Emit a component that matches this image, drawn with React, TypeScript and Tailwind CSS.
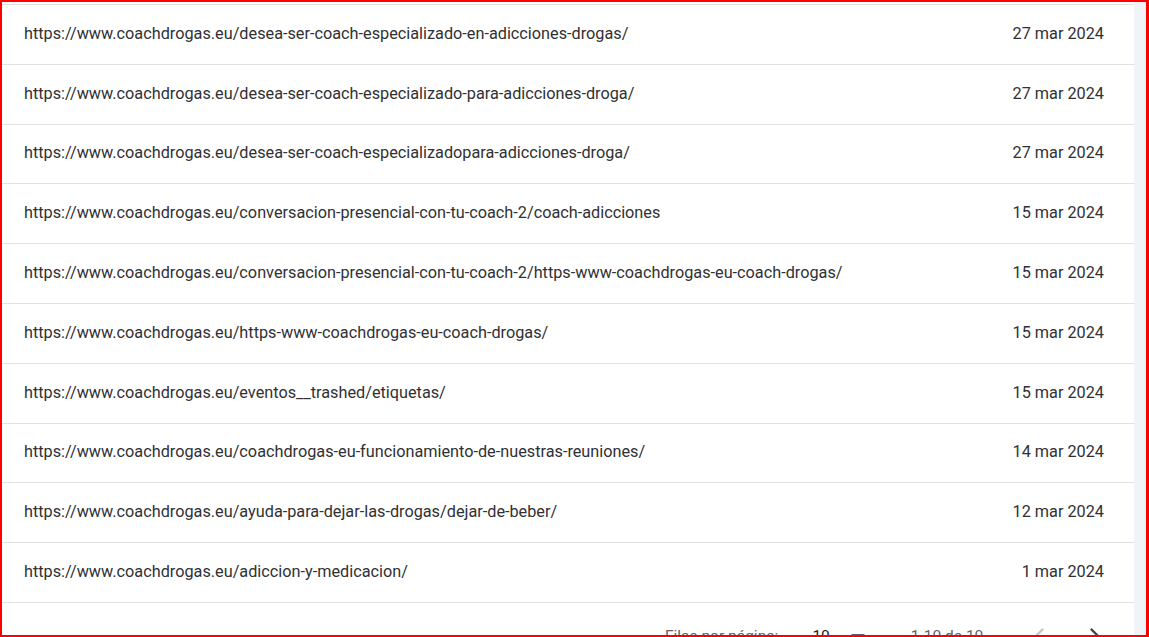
import React from "react";

const rows: [string, string][] = [
  ["https://www.coachdrogas.eu/desea-ser-coach-especializado-en-adicciones-drogas/", "27 mar 2024"],
  ["https://www.coachdrogas.eu/desea-ser-coach-especializado-para-adicciones-droga/", "27 mar 2024"],
  ["https://www.coachdrogas.eu/desea-ser-coach-especializadopara-adicciones-droga/", "27 mar 2024"],
  ["https://www.coachdrogas.eu/conversacion-presencial-con-tu-coach-2/coach-adicciones", "15 mar 2024"],
  ["https://www.coachdrogas.eu/conversacion-presencial-con-tu-coach-2/https-www-coachdrogas-eu-coach-drogas/", "15 mar 2024"],
  ["https://www.coachdrogas.eu/https-www-coachdrogas-eu-coach-drogas/", "15 mar 2024"],
  ["https://www.coachdrogas.eu/eventos__trashed/etiquetas/", "15 mar 2024"],
  ["https://www.coachdrogas.eu/coachdrogas-eu-funcionamiento-de-nuestras-reuniones/", "14 mar 2024"],
  ["https://www.coachdrogas.eu/ayuda-para-dejar-las-drogas/dejar-de-beber/", "12 mar 2024"],
  ["https://www.coachdrogas.eu/adiccion-y-medicacion/", "1 mar 2024"],
];

export default function App() {
  return (
    <div
      className="w-[1149px] h-[637px] overflow-hidden border-t-2 border-l-2 border-b-2 border-r-[3px] border-[#ff0000] flex bg-white"
      style={{ fontFamily: "Roboto, 'Noto Sans', sans-serif" }}
    >
      <div className="w-[1132px] h-full flex flex-col bg-white">
        <div className="h-[2px] shrink-0" />
        <div className="border-t border-[#e0e0e0]">
          {rows.map(([url, date], i) => (
            <div
              key={i}
              className="h-[59.8px] border-b border-[#e0e0e0] flex items-center justify-between pl-[22px] pr-[30px] pb-[2px] text-[16.25px] leading-[19px] text-[#303134]"
            >
              <span>{url}</span>
              <span>{date}</span>
            </div>
          ))}
        </div>
        <div className="flex items-start pt-[24px] text-[15.5px] leading-[19px] text-[#5f6368] pl-[663px]">
          <span>Filas por página:</span>
          <span className="ml-[34px] text-[#202124]">10</span>
          <span className="ml-[21px] mt-[7px] w-0 h-0 border-l-[7px] border-r-[7px] border-t-[7px] border-l-transparent border-r-transparent border-t-[#5f6368]" />
          <span className="ml-[46px]">1-10 de 10</span>
          <svg className="ml-[43px] -mt-[6px] shrink-0" width="28" height="28" viewBox="0 0 24 24">
            <path d="M15.41 7.41 14 6l-6 6 6 6 1.41-1.41L10.83 12z" fill="#c4c7c5" />
          </svg>
          <svg className="ml-[26px] -mt-[6px] shrink-0" width="28" height="28" viewBox="0 0 24 24">
            <path d="M10 6 8.59 7.41 13.17 12l-4.58 4.59L10 18l6-6z" fill="#444746" />
          </svg>
        </div>
      </div>
      <div className="flex-1 h-full bg-[#f0f3f8]" />
    </div>
  );
}
